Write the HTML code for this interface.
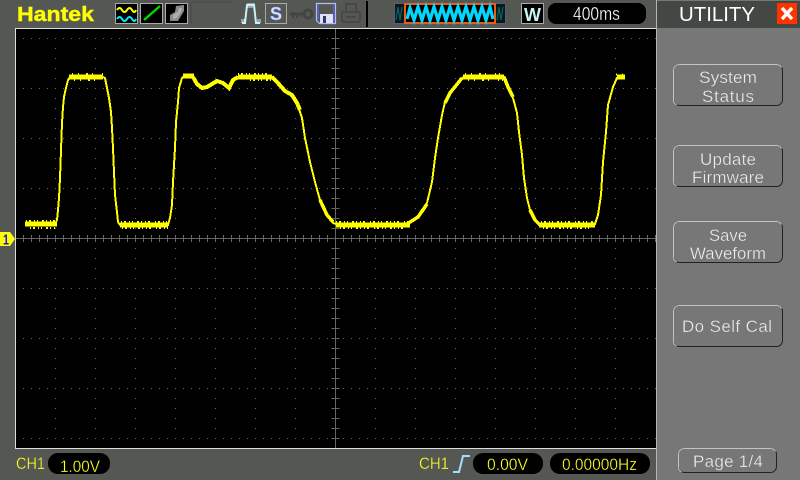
<!DOCTYPE html>
<html><head><meta charset="utf-8"><title>Hantek UTILITY</title>
<style>
html,body{margin:0;padding:0;background:#555753;width:800px;height:480px;overflow:hidden}
svg{display:block}
text{font-family:"Liberation Sans",sans-serif}
</style></head><body>
<svg width="800" height="480" viewBox="0 0 800 480" xmlns="http://www.w3.org/2000/svg">
<rect width="800" height="480" fill="#555753"/>
<!-- scope screen -->
<rect x="15" y="28" width="641" height="421" fill="#dcdcdc"/>
<rect x="16" y="29" width="640" height="419" fill="#000"/>
<g shape-rendering="crispEdges">
<g stroke="#6a6a6a" stroke-width="1" stroke-dasharray="1 7">
<line x1="23" x2="656" y1="38.5" y2="38.5"/><line x1="23" x2="656" y1="88.5" y2="88.5"/><line x1="23" x2="656" y1="138.5" y2="138.5"/><line x1="23" x2="656" y1="188.5" y2="188.5"/><line x1="23" x2="656" y1="288.5" y2="288.5"/><line x1="23" x2="656" y1="338.5" y2="338.5"/><line x1="23" x2="656" y1="388.5" y2="388.5"/><line x1="23" x2="656" y1="438.5" y2="438.5"/>
</g>
<g stroke="#6a6a6a" stroke-width="1" stroke-dasharray="1 9">
<line y1="38" y2="448" x1="55.5" x2="55.5"/><line y1="38" y2="448" x1="95.5" x2="95.5"/><line y1="38" y2="448" x1="135.5" x2="135.5"/><line y1="38" y2="448" x1="175.5" x2="175.5"/><line y1="38" y2="448" x1="215.5" x2="215.5"/><line y1="38" y2="448" x1="255.5" x2="255.5"/><line y1="38" y2="448" x1="295.5" x2="295.5"/><line y1="38" y2="448" x1="375.5" x2="375.5"/><line y1="38" y2="448" x1="415.5" x2="415.5"/><line y1="38" y2="448" x1="455.5" x2="455.5"/><line y1="38" y2="448" x1="495.5" x2="495.5"/><line y1="38" y2="448" x1="535.5" x2="535.5"/><line y1="38" y2="448" x1="575.5" x2="575.5"/><line y1="38" y2="448" x1="615.5" x2="615.5"/>
</g>
<line x1="16" x2="656" y1="238.5" y2="238.5" stroke="#666"/>
<line y1="29" y2="448" x1="335.5" x2="335.5" stroke="#666"/>
<line x1="23" x2="656" y1="238.5" y2="238.5" stroke="#666" stroke-width="7" stroke-dasharray="1 7"/>
<line y1="38" y2="448" x1="335.5" x2="335.5" stroke="#666" stroke-width="8" stroke-dasharray="1 9"/>
<!-- waveform -->
<g fill="none" stroke="#ffff00" stroke-linejoin="miter">
<polyline stroke-width="2" points="25,224 55,224 57,220 58,210 59,198 60,178 61,150 62,123 63,107 64,97 66,88 68,80 70,77 103,77 105,78 107,88 109,98 111,112 112,128 113,148 114,172 115,195 117,212 118,222 120,225 168,225 170,218 172,205 173,182 175,148 176,122 178,102 179,88 182,78 184,76 193,77 197,84 202,89 207,88 212,84 217,82 223,83 229,89 233,80 238,77 272,77 277,82 285,91 292,95 297,103 300,112 302,118 305,138 310,162 315,182 320,200 327,215 333,223 340,225 407,225 418,217 427,203 432,182 435,158 438,138 442,115 445,102 450,93 458,83 462,78 465,77 504,77 508,87 513,98 517,113 519,132 522,155 524,178 527,198 530,210 535,220 539,225 595,224 598,215 601,195 603,162 606,132 608,105 613,87 617,78 625,77"/>
<polyline stroke-width="4" points="193,77 197,84 202,88 207,87 212,84 217,81 223,83 229,88 233,80 238,77"/>
<polyline stroke-width="4" points="272,77 277,82 285,91 292,95 297,103 300,110"/>
<polyline stroke-width="3.500" points="320,200 327,215 333,222"/>
<polyline stroke-width="3.500" points="407,224 418,217 427,204"/>
<polyline stroke-width="3.500" points="445,103 450,93 458,83 462,78"/>
<polyline stroke-width="3.500" points="504,77 508,87 513,97"/>
<polyline stroke-width="3.500" points="530,210 535,220 539,224"/>
<g stroke-width="5">
<line x1="25" x2="57" y1="224" y2="224"/><line x1="120" x2="168" y1="225" y2="225"/><line x1="336" x2="410" y1="225" y2="225"/><line x1="539" x2="595" y1="225" y2="225"/>
<line x1="69" x2="103" y1="77" y2="77"/><line x1="183" x2="194" y1="76" y2="76"/><line x1="238" x2="272" y1="77" y2="77"/><line x1="463" x2="504" y1="77" y2="77"/><line x1="617" x2="625" y1="77" y2="77"/>
</g>
<g stroke-width="2" stroke-dasharray="1 2 2 3 1 2 1 4 2 2 1 3 1 2 2 5">
<line x1="26" x2="57" y1="221" y2="221"/><line x1="30" x2="57" y1="228" y2="228"/>
<line x1="121" x2="168" y1="222" y2="222"/><line x1="122" x2="168" y1="228" y2="228"/>
<line x1="336" x2="408" y1="222" y2="222"/><line x1="340" x2="408" y1="228" y2="228"/>
<line x1="541" x2="595" y1="222" y2="222"/><line x1="543" x2="592" y1="228" y2="228"/>
<line x1="238" x2="272" y1="74" y2="74"/><line x1="250" x2="272" y1="80" y2="80"/>
</g>
<g stroke-width="2" stroke-dasharray="1 5 1 7 2 4 1 9 1 3">
<line x1="72" x2="103" y1="74" y2="74"/><line x1="74" x2="103" y1="80" y2="80"/>
<line x1="465" x2="504" y1="74" y2="74"/><line x1="468" x2="504" y1="80" y2="80"/>
<line x1="616" x2="625" y1="74.500" y2="74.500"/>
</g>
</g>
</g>
<!-- channel marker -->
<polygon points="0,232 10,232 15,239 10,246 0,246" fill="#ffff00"/>
<text x="3" y="244.500" font-size="15" font-weight="bold" fill="#1414e0" textLength="6" lengthAdjust="spacingAndGlyphs">1</text>

<!-- right panel -->
<rect x="657" y="0" width="143" height="480" fill="#777777"/>
<rect x="656" y="0" width="1" height="480" fill="#b4b4b4"/>
<rect x="657" y="1" width="143" height="27" fill="#444844"/>
<text x="679" y="21" font-size="20" fill="#fff" textLength="76" lengthAdjust="spacingAndGlyphs">UTILITY</text>
<rect x="777" y="3" width="20" height="21" fill="#ff3300"/>
<path d="M782 8 L792 19 M792 8 L782 19" stroke="#fff" stroke-width="3.400" fill="none"/>

<!-- buttons -->
<g fill="none" stroke-width="1">
<rect x="673.500" y="64.500" width="109" height="41" rx="6" stroke="#222"/><path d="M673.500 99 V70.500 a6 6 0 0 1 6 -6 H776.500 a6 6 0 0 1 5 3 M673.500 99 a6 6 0 0 0 3 6" stroke="#c4c4c4"/>
<rect x="673.500" y="145.500" width="109" height="41" rx="6" stroke="#222"/><path d="M673.500 180 V151.500 a6 6 0 0 1 6 -6 H776.500 a6 6 0 0 1 5 3 M673.500 180 a6 6 0 0 0 3 6" stroke="#c4c4c4"/>
<rect x="673.500" y="221.500" width="109" height="41" rx="6" stroke="#222"/><path d="M673.500 256 V227.500 a6 6 0 0 1 6 -6 H776.500 a6 6 0 0 1 5 3 M673.500 256 a6 6 0 0 0 3 6" stroke="#c4c4c4"/>
<rect x="673.500" y="305.500" width="109" height="41" rx="6" stroke="#222"/><path d="M673.500 340 V311.500 a6 6 0 0 1 6 -6 H776.500 a6 6 0 0 1 5 3 M673.500 340 a6 6 0 0 0 3 6" stroke="#c4c4c4"/>
<rect x="678.500" y="448.500" width="98" height="24" rx="6" stroke="#222"/><path d="M678.500 466 V454.500 a6 6 0 0 1 6 -6 H770.500 a6 6 0 0 1 5 3 M678.500 466 a6 6 0 0 0 3 6" stroke="#c4c4c4"/>
</g>
<g font-size="17" fill="#f0f0f0" stroke="#777" stroke-width="0.350">
<text x="699" y="83" textLength="58" lengthAdjust="spacingAndGlyphs">System</text>
<text x="702" y="102" textLength="52" lengthAdjust="spacing">Status</text>
<text x="700" y="165" textLength="56" lengthAdjust="spacing">Update</text>
<text x="692" y="183" textLength="72" lengthAdjust="spacing">Firmware</text>
<text x="709" y="241" textLength="38" lengthAdjust="spacingAndGlyphs">Save</text>
<text x="690" y="259" textLength="76" lengthAdjust="spacingAndGlyphs">Waveform</text>
<text x="682" y="332" textLength="90" lengthAdjust="spacing">Do Self Cal</text>
<text x="693" y="467" textLength="70" lengthAdjust="spacing">Page 1/4</text>
</g>

<!-- top bar -->
<text x="17" y="21" font-size="20" font-weight="bold" fill="#ffff00" stroke="#ffff00" stroke-width="0.400" textLength="77" lengthAdjust="spacingAndGlyphs">Hantek</text>
<g shape-rendering="crispEdges">
<rect x="115.500" y="3.500" width="22" height="20" fill="#000" stroke="#aaa"/>
<rect x="140.500" y="3.500" width="22" height="20" fill="#000" stroke="#aaa"/>
<rect x="165.500" y="3.500" width="22" height="20" fill="#000" stroke="#aaa"/>
<rect x="265.500" y="3.500" width="21" height="20" fill="#555753" stroke="#aaa"/>
<rect x="521.500" y="3.500" width="22" height="20" fill="#000" stroke="#aaa"/>
</g>
<path d="M117 10 q2.500 -4 5 0 t5 0 t5 0 t4 0" fill="none" stroke="#ffff00" stroke-width="2"/>
<path d="M117 19 q2.500 -4 5 0 t5 0 t5 0 t4 0" fill="none" stroke="#00e8ff" stroke-width="2"/>
<line x1="144" y1="20" x2="160" y2="6" stroke="#00d800" stroke-width="2.400"/>
<path d="M170 21 L170 15 L175 12 L176 6 L184 5 L184 11 L181 16 L178 21 Z" fill="#8a8a8a"/>
<path d="M173 19 L173 15 L178 12 L179 8 L182 8 L181 12 L177 18 Z" fill="#b0b0b0"/>
<path d="M192 23 Q191 23 191 20 V5 Q191 2 194 2 H233" fill="none" stroke="#484848" stroke-width="1"/>
<path d="M242 23 H245 L247 5 H254 L256 23 H260" fill="none" stroke="#c8f0fa" stroke-width="2"/>
<path d="M242 19 V23 M244 19 V23 M248 3 V8 M250 3 V8 M252 3 V8 M254 3 V8 M258 19 V23 M260 19 V23" stroke="#c8f0fa" stroke-width="1"/>
<text x="270" y="20" font-size="18" font-weight="bold" fill="#d4e4ff" stroke="#8aa0ff" stroke-width="0.500" textLength="12" lengthAdjust="spacingAndGlyphs">S</text>
<!-- key -->
<g fill="none" stroke="#444" stroke-width="3">
<circle cx="308" cy="14" r="4"/>
<path d="M290 14 H304"/>
</g>
<path d="M293 14 V18 M297 14 V18 M301 14 V17" stroke="#444" stroke-width="2"/>
<!-- floppy -->
<path d="M316.500 3.500 H335.500 V23.500 H319.500 L316.500 20.500 Z" fill="#555753" stroke="#b4bcff" stroke-width="1.200"/>
<rect x="317" y="4" width="2" height="16" fill="#5860b0"/>
<rect x="333" y="4" width="2" height="19" fill="#5860b0"/>
<rect x="320" y="14" width="13" height="9" fill="#dfe2f4"/>
<rect x="323" y="16" width="3" height="7" fill="#30386a"/>
<!-- printer -->
<g fill="none" stroke="#484848" stroke-width="2">
<rect x="346" y="4" width="10" height="8"/>
<rect x="342" y="12" width="18" height="10" rx="2"/>
<path d="M346 17 H356"/>
</g>
<rect x="366" y="1" width="2" height="26" fill="#000"/>
<!-- time bar -->
<rect x="394.500" y="3.500" width="111" height="20" fill="#0a1a1a" stroke="#5a5a88"/>
<rect x="405" y="4" width="90" height="19" fill="#000" stroke="#ee5a1c" stroke-width="2"/>
<path d="M407 19 L410 8 L414 20 L418 7 L422 20 L426 7 L430 20 L434 7 L438 20 L442 7 L446 20 L450 7 L454 20 L458 7 L462 20 L466 7 L470 20 L474 7 L478 20 L482 7 L486 20 L490 7 L493 19" fill="none" stroke="#00d8ff" stroke-width="3.200"/>
<path d="M396 20 L398 7 L400 20 L402 7" fill="none" stroke="#0a6a6a" stroke-width="1"/>
<path d="M497 20 L499 7 L501 20 L503 7" fill="none" stroke="#0a6a6a" stroke-width="1"/>
<text x="524" y="21" font-size="18" font-weight="bold" fill="#c8f4f4" textLength="17" lengthAdjust="spacingAndGlyphs">W</text>
<rect x="548" y="3" width="98" height="21" rx="8" fill="#000"/>
<text x="573" y="20" font-size="18" fill="#fff" stroke="#000" stroke-width="0.300" textLength="47" lengthAdjust="spacingAndGlyphs">400ms</text>

<!-- bottom bar -->
<text x="16" y="469" font-size="17" fill="#ffff20" stroke="#555753" stroke-width="0.300" textLength="29" lengthAdjust="spacingAndGlyphs">CH1</text>
<rect x="48" y="453" width="62" height="21" rx="10" fill="#000"/>
<text x="60" y="472" font-size="16.500" fill="#ffff20" stroke="#000" stroke-width="0.300" textLength="40" lengthAdjust="spacingAndGlyphs">1.00V</text>
<text x="419" y="469" font-size="17" fill="#ffff20" stroke="#555753" stroke-width="0.300" textLength="30" lengthAdjust="spacingAndGlyphs">CH1</text>
<path d="M453 472 H459 L463 456 H470" fill="none" stroke="#a0e0ff" stroke-width="2"/>
<rect x="473" y="453" width="70" height="21" rx="10" fill="#000"/>
<text x="487" y="470" font-size="16.500" fill="#ffff20" stroke="#000" stroke-width="0.300" textLength="41" lengthAdjust="spacingAndGlyphs">0.00V</text>
<rect x="550" y="453" width="100" height="21" rx="10" fill="#000"/>
<text x="562" y="470" font-size="16.500" fill="#ffff20" stroke="#000" stroke-width="0.300" textLength="75" lengthAdjust="spacingAndGlyphs">0.00000Hz</text>
</svg>
</body></html>
